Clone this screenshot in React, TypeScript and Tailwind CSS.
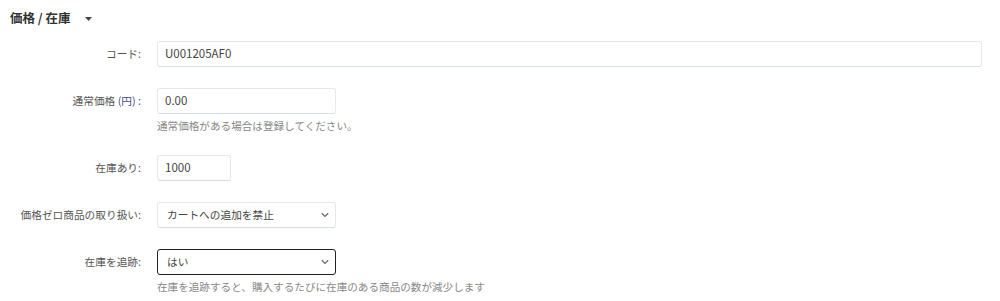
import React from "react";

const font = { fontFamily: '"Noto Sans CJK JP", "Noto Sans", sans-serif' };

function Chevron() {
  return (
    <svg width="8" height="5" viewBox="0 0 8 5" className="absolute right-[6px] top-1/2 -translate-y-1/2">
      <path d="M0.8 0.8 L4 3.9 L7.2 0.8" fill="none" stroke="#666" strokeWidth="1.2" />
    </svg>
  );
}

function Row({ label, children, help }: { label: React.ReactNode; children: React.ReactNode; help?: string }) {
  return (
    <div className="flex items-start">
      <div className="w-[141px] shrink-0 h-[26px] flex items-center justify-end text-[10.7px] text-[#555] whitespace-nowrap">{label}</div>
      <div className="ml-[16px] flex-1 flex flex-col">
        {children}
        {help && <div className="mt-[4px] text-[10.6px] leading-[16px] text-[#888]">{help}</div>}
      </div>
    </div>
  );
}

const inputCls =
  "h-[26px] border border-[#e5e8ec] border-b-[#d6dde4] rounded-[3px] bg-white flex items-center px-[7px] text-[#444]";

export default function App() {
  return (
    <div className="w-[1000px] h-[301px] bg-white overflow-hidden" style={font}>
      <div className="pl-[10px] pt-[9px] h-[32px] flex items-start">
        <span className="text-[12.5px] font-bold text-[#333] leading-[18px]">価格 / 在庫</span>
        <svg width="7" height="4" viewBox="0 0 7 4" className="ml-[14px] mt-[8px]">
          <path d="M0 0 L7 0 L3.5 4 Z" fill="#444" />
        </svg>
      </div>
      <div className="flex flex-col gap-[21px] pr-[18px] mt-[9px]">
        <Row label="コード:">
          <div className={inputCls + " text-[11.5px]"}>U001205AF0</div>
        </Row>
        <Row label={<span>通常価格 <span className="text-[#4a4a8a]">(円)</span> :</span>} help="通常価格がある場合は登録してください。">
          <div className={inputCls + " w-[179px] text-[11.5px]"}>0.00</div>
        </Row>
        <Row label="在庫あり:">
          <div className={inputCls + " w-[74px] text-[11.5px]"}>1000</div>
        </Row>
        <Row label="価格ゼロ商品の取り扱い:">
          <div className={inputCls + " w-[179px] relative text-[10.7px]"}>
            <span className="ml-[2px]">カートへの追加を禁止</span>
            <Chevron />
          </div>
        </Row>
        <Row label="在庫を追跡:" help="在庫を追跡すると、購入するたびに在庫のある商品の数が減少します">
          <div className="h-[26px] w-[179px] border border-[#222] rounded-[3px] bg-white flex items-center px-[7px] text-[10.7px] text-[#444] relative">
            <span className="ml-[2px]">はい</span>
            <Chevron />
          </div>
        </Row>
      </div>
    </div>
  );
}
